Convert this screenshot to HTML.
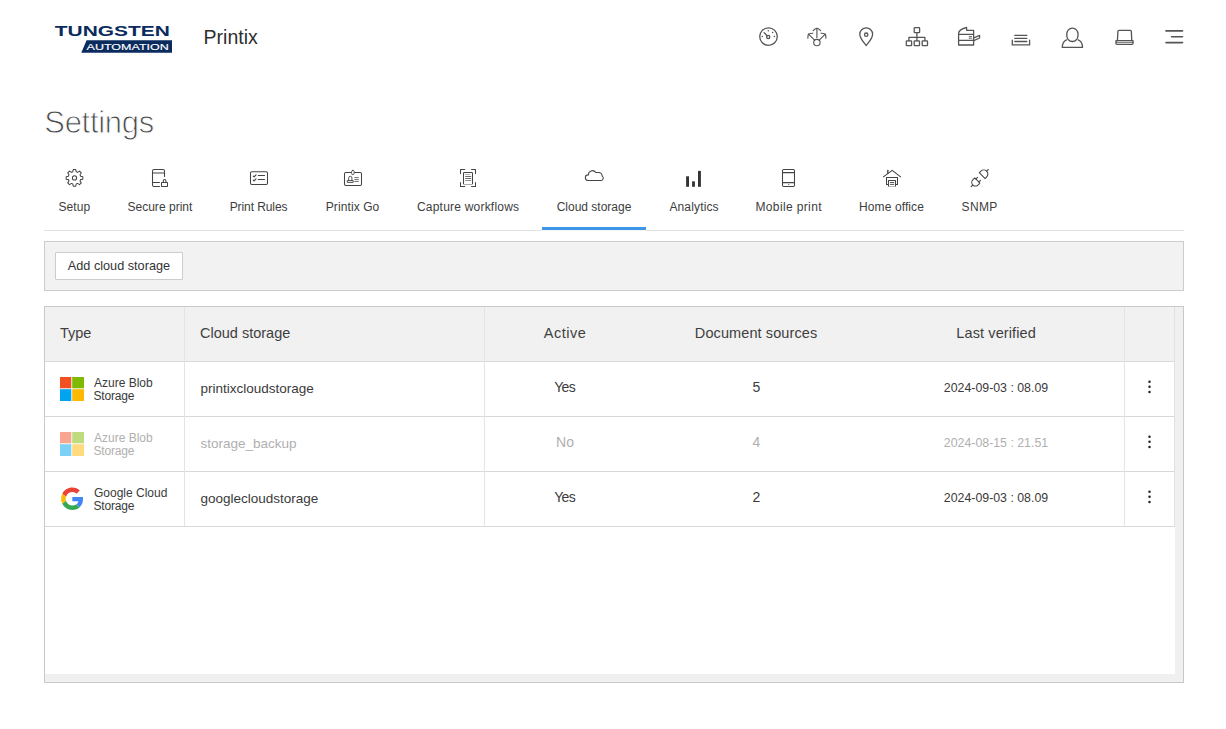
<!DOCTYPE html>
<html><head><meta charset="utf-8"><title>Settings - Cloud storage</title>
<style>
html,body{margin:0;padding:0;background:#fff;}
body{width:1226px;height:729px;position:relative;overflow:hidden;font-family:"Liberation Sans",sans-serif;}
.t{position:absolute;line-height:1;white-space:nowrap;}
.r{position:absolute;box-sizing:border-box;}
svg{position:absolute;left:0;top:0;overflow:visible;}
</style></head><body>
<div class="r" style="left:44px;top:230px;width:498px;height:1px;background:#e3e3e3;"></div>
<div class="r" style="left:646px;top:230px;width:538px;height:1px;background:#e3e3e3;"></div>
<div class="r" style="left:542px;top:230px;width:104px;height:1px;background:#f6f3ee;"></div>
<div class="r" style="left:542px;top:227px;width:104px;height:3px;background:#3c97e8;"></div>
<div class="r" style="left:44px;top:241px;width:1140px;height:50px;background:#f2f2f2;border:1px solid #cccccc;"></div>
<div class="r" style="left:55px;top:252px;width:128px;height:28px;background:#ffffff;border:1px solid #cccccc;border-radius:1px;"></div>
<div class="r" style="left:44px;top:306px;width:1140px;height:377px;background:#f0f0f0;border:1px solid #c9c9c9;"></div>
<div class="r" style="left:45px;top:307px;width:1130px;height:367px;background:#ffffff;"></div>
<div class="r" style="left:45px;top:307px;width:1130px;height:54px;background:#f1f1f1;"></div>
<div class="r" style="left:45px;top:361px;width:1130px;height:1px;background:#dadada;"></div>
<div class="r" style="left:45px;top:416px;width:1130px;height:1px;background:#d8d8d8;"></div>
<div class="r" style="left:45px;top:471px;width:1130px;height:1px;background:#d8d8d8;"></div>
<div class="r" style="left:45px;top:526px;width:1130px;height:1px;background:#d8d8d8;"></div>
<div class="r" style="left:184px;top:307px;width:1px;height:219px;background:#e4e4e4;"></div>
<div class="r" style="left:484px;top:307px;width:1px;height:219px;background:#e4e4e4;"></div>
<div class="r" style="left:1124px;top:307px;width:1px;height:219px;background:#e4e4e4;"></div>
<div class="r" style="left:1174px;top:307px;width:1px;height:220px;background:#e0e0e0;"></div>
<div class="t" style="top:28.39px;font-size:19.5px;color:#2e2e2e;left:203.60px;">Printix</div>
<div class="t" style="top:106.66px;font-size:31px;color:#4a4a4a;letter-spacing:-0.3px;left:44.30px;-webkit-text-stroke:0.9px #fff;">Settings</div>
<div class="t" style="top:201.14px;font-size:12px;color:#3d3d3d;letter-spacing:0.075px;left:-225.66px;width:600px;text-align:center;">Setup</div>
<div class="t" style="top:201.14px;font-size:12px;color:#3d3d3d;letter-spacing:0.027px;left:-140.09px;width:600px;text-align:center;">Secure print</div>
<div class="t" style="top:201.14px;font-size:12px;color:#3d3d3d;letter-spacing:-0.08px;left:-41.44px;width:600px;text-align:center;">Print Rules</div>
<div class="t" style="top:201.14px;font-size:12px;color:#3d3d3d;letter-spacing:0.1px;left:52.55px;width:600px;text-align:center;">Printix Go</div>
<div class="t" style="top:201.14px;font-size:12px;color:#3d3d3d;letter-spacing:0.213px;left:168.11px;width:600px;text-align:center;">Capture workflows</div>
<div class="t" style="top:201.14px;font-size:12px;color:#3d3d3d;left:294.00px;width:600px;text-align:center;">Cloud storage</div>
<div class="t" style="top:201.14px;font-size:12px;color:#3d3d3d;letter-spacing:0.15px;left:394.08px;width:600px;text-align:center;">Analytics</div>
<div class="t" style="top:201.14px;font-size:12px;color:#3d3d3d;letter-spacing:0.364px;left:488.68px;width:600px;text-align:center;">Mobile print</div>
<div class="t" style="top:201.14px;font-size:12px;color:#3d3d3d;letter-spacing:0.1px;left:591.55px;width:600px;text-align:center;">Home office</div>
<div class="t" style="top:201.14px;font-size:12px;color:#3d3d3d;letter-spacing:0.367px;left:679.68px;width:600px;text-align:center;">SNMP</div>
<div class="t" style="top:259.85px;font-size:12.7px;color:#333333;left:67.80px;">Add cloud storage</div>
<div class="t" style="top:325.73px;font-size:14.5px;color:#3f3f3f;left:60.00px;">Type</div>
<div class="t" style="top:325.73px;font-size:14.5px;color:#3f3f3f;left:200.00px;">Cloud storage</div>
<div class="t" style="top:325.73px;font-size:14.5px;color:#3f3f3f;letter-spacing:0.5px;left:265.00px;width:600px;text-align:center;">Active</div>
<div class="t" style="top:325.73px;font-size:14.5px;color:#3f3f3f;letter-spacing:0.1px;left:456.10px;width:600px;text-align:center;">Document sources</div>
<div class="t" style="top:325.73px;font-size:14.5px;color:#3f3f3f;letter-spacing:0.1px;left:696.10px;width:600px;text-align:center;">Last verified</div>
<div class="t" style="top:376.84px;font-size:12px;color:#3a3a3a;left:94.00px;">Azure Blob</div>
<div class="t" style="top:389.84px;font-size:12px;color:#3a3a3a;letter-spacing:-0.2px;left:93.50px;">Storage</div>
<div class="t" style="top:381.97px;font-size:13.5px;color:#3a3a3a;left:200.50px;">printixcloudstorage</div>
<div class="t" style="top:379.75px;font-size:14px;color:#3a3a3a;letter-spacing:-0.6px;left:264.70px;width:600px;text-align:center;">Yes</div>
<div class="t" style="top:379.75px;font-size:14px;color:#3a3a3a;left:456.50px;width:600px;text-align:center;">5</div>
<div class="t" style="top:381.55px;font-size:12.35px;color:#3a3a3a;left:696.00px;width:600px;text-align:center;">2024-09-03 : 08.09</div>
<div class="t" style="top:431.84px;font-size:12px;color:#afafaf;left:94.00px;">Azure Blob</div>
<div class="t" style="top:444.84px;font-size:12px;color:#afafaf;letter-spacing:-0.2px;left:93.50px;">Storage</div>
<div class="t" style="top:436.97px;font-size:13.5px;color:#afafaf;left:200.50px;">storage_backup</div>
<div class="t" style="top:434.75px;font-size:14px;color:#afafaf;left:265.00px;width:600px;text-align:center;">No</div>
<div class="t" style="top:434.75px;font-size:14px;color:#afafaf;left:456.50px;width:600px;text-align:center;">4</div>
<div class="t" style="top:436.55px;font-size:12.35px;color:#afafaf;left:696.00px;width:600px;text-align:center;">2024-08-15 : 21.51</div>
<div class="t" style="top:486.84px;font-size:12px;color:#3a3a3a;left:94.00px;">Google Cloud</div>
<div class="t" style="top:499.84px;font-size:12px;color:#3a3a3a;letter-spacing:-0.2px;left:93.50px;">Storage</div>
<div class="t" style="top:491.97px;font-size:13.5px;color:#3a3a3a;left:200.50px;">googlecloudstorage</div>
<div class="t" style="top:489.75px;font-size:14px;color:#3a3a3a;letter-spacing:-0.6px;left:264.70px;width:600px;text-align:center;">Yes</div>
<div class="t" style="top:489.75px;font-size:14px;color:#3a3a3a;left:456.50px;width:600px;text-align:center;">2</div>
<div class="t" style="top:491.55px;font-size:12.35px;color:#3a3a3a;left:696.00px;width:600px;text-align:center;">2024-09-03 : 08.09</div>
<svg width="1226" height="729" viewBox="0 0 1226 729"><circle cx="1149.5" cy="381.7" r="1.25" fill="#222"/><circle cx="1149.5" cy="386.8" r="1.25" fill="#222"/><circle cx="1149.5" cy="392" r="1.25" fill="#222"/><g><rect x="60" y="377" width="11.3" height="11.3" fill="#f25022"/><rect x="72.2" y="377" width="11.8" height="11.3" fill="#7fba00"/><rect x="60" y="389.2" width="11.3" height="11.8" fill="#00a4ef"/><rect x="72.2" y="389.2" width="11.8" height="11.8" fill="#ffb900"/></g><circle cx="1149.5" cy="436.7" r="1.25" fill="#222"/><circle cx="1149.5" cy="441.8" r="1.25" fill="#222"/><circle cx="1149.5" cy="447" r="1.25" fill="#222"/><g opacity="0.5"><rect x="60" y="432" width="11.3" height="11.3" fill="#f25022"/><rect x="72.2" y="432" width="11.8" height="11.3" fill="#7fba00"/><rect x="60" y="444.2" width="11.3" height="11.8" fill="#00a4ef"/><rect x="72.2" y="444.2" width="11.8" height="11.8" fill="#ffb900"/></g><circle cx="1149.5" cy="491.7" r="1.25" fill="#222"/><circle cx="1149.5" cy="496.8" r="1.25" fill="#222"/><circle cx="1149.5" cy="502" r="1.25" fill="#222"/><g transform="translate(61.1 487.6) scale(0.4666666666666666)"><path fill="#EA4335" d="M24 9.5c3.54 0 6.71 1.22 9.21 3.6l6.85-6.85C35.9 2.38 30.47 0 24 0 14.62 0 6.51 5.38 2.56 13.22l7.98 6.19C12.43 13.72 17.74 9.5 24 9.5z"/><path fill="#4285F4" d="M46.98 24.55c0-1.57-.15-3.090-.38-4.55H24v9.02h12.94c-.58 2.960-2.26 5.480-4.78 7.18l7.73 6c4.51-4.18 7.09-10.36 7.09-17.65z"/><path fill="#FBBC05" d="M10.53 28.59c-.48-1.45-.76-2.99-.76-4.59s.27-3.14.76-4.59l-7.98-6.19C.92 16.46 0 20.12 0 24c0 3.88.92 7.54 2.56 10.78l7.97-6.19z"/><path fill="#34A853" d="M24 48c6.48 0 11.93-2.13 15.89-5.81l-7.73-6c-2.15 1.45-4.92 2.3-8.16 2.3-6.26 0-11.57-4.22-13.47-9.91l-7.98 6.19C6.51 42.62 14.62 48 24 48z"/></g><text x="54.8" y="35.6" font-family="Liberation Sans" font-weight="bold" font-size="15" fill="#0b2b5e" textLength="115" lengthAdjust="spacingAndGlyphs">TUNGSTEN</text><polygon points="86.6,40.3 172,40.3 172,52.8 81.3,52.8" fill="#0b2b5e"/><text x="86.6" y="49.9" font-family="Liberation Sans" font-weight="normal" font-size="9.4" fill="#fff" stroke="#fff" stroke-width="0.15" textLength="82.2" lengthAdjust="spacingAndGlyphs">AUTOMATION</text><g fill="none" stroke="#555" stroke-width="1.3" stroke-linecap="round" stroke-linejoin="round"><circle cx="768.5" cy="36.6" r="8.8"/><circle cx="768.2" cy="36.9" r="1.6"/><line x1="767.1" y1="35.7" x2="764.1" y2="32.6"/></g><g fill="#555"><circle cx="768.3" cy="30.8" r="0.75"/><circle cx="772.6" cy="32.5" r="0.75"/><circle cx="762.2" cy="36.6" r="0.75"/><circle cx="774.4" cy="36.6" r="0.75"/></g><g fill="none" stroke="#555" stroke-width="1.15" stroke-linecap="round" stroke-linejoin="round"><circle cx="816.9" cy="42.5" r="3.2"/><line x1="816.9" y1="37.6" x2="816.9" y2="28.4"/><path d="M813.2,30.6 Q815,28.6 816.9,28.2 Q818.8,28.6 820.6,30.6"/><line x1="814.6" y1="40.1" x2="808.5" y2="34.2"/><path d="M812.7,33.2 Q810,33.4 808.4,34.2 Q807.8,36 807.9,38.2"/><line x1="819.2" y1="40.1" x2="825.3" y2="34.2"/><path d="M821.1,33.2 Q823.8,33.4 825.4,34.2 Q826,36 825.9,38.2"/></g><g fill="none" stroke="#555" stroke-width="1.3" stroke-linecap="round" stroke-linejoin="round"><path d="M866.2,45.6 C863,41.5 859.8,38.3 859.8,34.3 A6.4,6.4 0 0 1 872.6,34.3 C872.6,38.3 869.4,41.5 866.2,45.6 Z"/><circle cx="866.2" cy="34.7" r="1.7"/></g><g fill="none" stroke="#555" stroke-width="1.3" stroke-linecap="round" stroke-linejoin="round"><rect x="914.2" y="27.6" width="5.4" height="5" rx="0.6"/><line x1="916.9" y1="32.6" x2="916.9" y2="40.8"/><polyline points="908.9,40.8 908.9,37.4 924.9,37.4 924.9,40.8"/><rect x="906.3" y="40.8" width="5.3" height="4.9" rx="0.6"/><rect x="914.2" y="40.8" width="5.3" height="4.9" rx="0.6"/><rect x="922.2" y="40.8" width="5.3" height="4.9" rx="0.6"/></g><g fill="none" stroke="#555" stroke-width="1.3" stroke-linecap="round" stroke-linejoin="round"><path d="M958.6,45 V33.5 C958.6,30.5 962.5,28.5 966.6,27.5 V30.3 H973.6 V45 Z"/><line x1="958.6" y1="34.3" x2="973.6" y2="34.3"/><line x1="958.6" y1="40.3" x2="973.6" y2="40.3"/><polyline points="973.8,37.8 979.6,35.4 979.6,38 973.8,40.6"/><line x1="969.2" y1="36.6" x2="971.6" y2="36.6" stroke-width="0.9"/><line x1="969.2" y1="38.2" x2="971.6" y2="38.2" stroke-width="0.9"/></g><g fill="none" stroke="#555" stroke-width="1.3" stroke-linecap="round" stroke-linejoin="round"><polyline points="1012.3,40.2 1012.3,44.9 1029.6,44.9 1029.6,40.2"/><line x1="1014.8" y1="35.4" x2="1026.8" y2="35.4"/><line x1="1014.8" y1="38.4" x2="1026.8" y2="38.4"/><line x1="1014.8" y1="41.5" x2="1026.8" y2="41.5"/></g><g fill="none" stroke="#555" stroke-width="1.3" stroke-linecap="round" stroke-linejoin="round"><rect x="1066.8" y="28.2" width="11.2" height="13.3" rx="5.4" ry="5.9"/><path d="M1066.6,39.8 C1063.5,41 1062.3,44 1062.3,47.4 H1082.5 C1082.5,44 1081.3,41 1078.2,39.8"/></g><g fill="none" stroke="#555" stroke-width="1.3" stroke-linecap="round" stroke-linejoin="round"><path d="M1117.4,40.6 L1117.9,31.4 Q1118,30.4 1119,30.4 H1130.2 Q1131.2,30.4 1131.3,31.4 L1131.8,40.6"/><path d="M1116,40.6 H1133 V43.6 Q1133,44.4 1132.2,44.4 H1116.8 Q1116,44.4 1116,43.6 Z"/><line x1="1116" y1="42.4" x2="1133" y2="42.4" stroke-width="0.8"/></g><g stroke="#555" stroke-width="1.6" stroke-linecap="round"><line x1="1166" y1="30.9" x2="1182.5" y2="30.9"/><line x1="1171.6" y1="36.8" x2="1182.5" y2="36.8"/><line x1="1166" y1="42.6" x2="1182.5" y2="42.6"/></g><g fill="none" stroke="#444" stroke-width="1.05" stroke-linecap="round" stroke-linejoin="round"><path d="M72.77,171.84 L73.25,169.59 L75.75,169.59 L76.23,171.84 A6.3,6.3 0 0 1 77.56,172.39 L79.49,171.15 L81.25,172.91 L80.01,174.84 A6.3,6.3 0 0 1 80.56,176.17 L82.81,176.65 L82.81,179.15 L80.56,179.63 A6.3,6.3 0 0 1 80.01,180.96 L81.25,182.89 L79.49,184.65 L77.56,183.41 A6.3,6.3 0 0 1 76.23,183.96 L75.75,186.21 L73.25,186.21 L72.77,183.96 A6.3,6.3 0 0 1 71.44,183.41 L69.51,184.65 L67.75,182.89 L68.99,180.96 A6.3,6.3 0 0 1 68.44,179.63 L66.19,179.15 L66.19,176.65 L68.44,176.17 A6.3,6.3 0 0 1 68.99,174.84 L67.75,172.91 L69.51,171.15 L71.44,172.39 A6.3,6.3 0 0 1 72.77,171.84 Z"/><circle cx="74.5" cy="177.9" r="2.1"/></g><g fill="none" stroke="#444" stroke-width="1.05" stroke-linecap="round" stroke-linejoin="round"><path d="M159.5,186.5 H154 Q152.5,186.5 152.5,185 V171 Q152.5,169.5 154,169.5 H163 Q164.5,169.5 164.5,171 V176.5"/><line x1="152.5" y1="172.9" x2="164.5" y2="172.9"/><line x1="152.5" y1="182.5" x2="159.5" y2="182.5"/><rect x="161.5" y="182.5" width="6" height="4" rx="0.3"/><path d="M163.3,182.5 V180.8 A1.3,1.3 0 0 1 165.9,180.8 V182.5"/></g><g fill="none" stroke="#444" stroke-width="1.05" stroke-linecap="round" stroke-linejoin="round"><rect x="250.5" y="171.8" width="17" height="12.7" rx="1.3"/><polyline points="253.3,176.1 254.1,176.9 256,174.9" stroke-width="1.2"/><polyline points="253.3,180.1 254.1,180.9 256,178.9" stroke-width="1.2"/><line x1="258.3" y1="175.5" x2="264.6" y2="175.5"/><line x1="258.3" y1="179.5" x2="264.6" y2="179.5"/></g><g fill="none" stroke="#444" stroke-width="1.05" stroke-linecap="round" stroke-linejoin="round"><path d="M350.8,172.5 H345.8 Q344.5,172.5 344.5,173.8 V184.2 Q344.5,185.5 345.8,185.5 H360.2 Q361.5,185.5 361.5,184.2 V173.8 Q361.5,172.5 360.2,172.5 H354.6"/><rect x="351.6" y="170.4" width="2.5" height="4.2" rx="1.1" stroke-width="0.9"/><rect x="347.6" y="180.6" width="5.6" height="1.8" stroke-width="0.9"/><path d="M348.7,180.6 V177.9 A1.6,1.6 0 0 1 351.9,177.9 V180.6" stroke-width="0.9"/><line x1="354.8" y1="177.5" x2="358.4" y2="177.5" stroke-width="0.7"/><line x1="354.8" y1="179.4" x2="358.4" y2="179.4" stroke-width="0.8"/><line x1="354.8" y1="181.4" x2="358.4" y2="181.4" stroke-width="0.8"/></g><g fill="none" stroke="#444" stroke-width="1.05" stroke-linecap="round" stroke-linejoin="round"><polyline points="460.5,173.6 460.5,169.5 464.8,169.5"/><polyline points="471.5,169.5 475.5,169.5 475.5,173.6"/><polyline points="460.5,182.4 460.5,186.5 464.8,186.5"/><polyline points="471.5,186.5 475.5,186.5 475.5,182.4"/><path d="M463.5,183.8 V173.3 Q463.5,172.5 464.3,172.5 H471.7 Q472.5,172.5 472.5,173.3 V183.8" /><line x1="464" y1="184.4" x2="472" y2="184.4" stroke="#aaa"/><line x1="465.6" y1="174.5" x2="469.8" y2="174.5" stroke-width="0.8" stroke="#999"/><line x1="465.6" y1="176.5" x2="470.8" y2="176.5" stroke-width="0.8"/><line x1="465.6" y1="178.5" x2="470.8" y2="178.5" stroke-width="0.8"/><line x1="465.6" y1="180.5" x2="470.8" y2="180.5" stroke-width="0.8" stroke="#777"/></g><g fill="none" stroke="#444" stroke-width="1.05" stroke-linecap="round" stroke-linejoin="round"><path d="M588,180.5 H600.8 A2.4,2.4 0 0 0 602.2,176.1 A3.8,3.8 0 0 0 598.6,172.5 H595.8 A4.1,4.1 0 0 0 588.3,174.9 A2.8,2.8 0 0 0 588,180.5 Z"/></g><g fill="#333"><rect x="686.1" y="176.3" width="2.9" height="10.5"/><rect x="692.1" y="181.3" width="2.8" height="5.5"/><rect x="698" y="170.9" width="2.9" height="15.9"/></g><g fill="none" stroke="#444" stroke-width="1.05" stroke-linecap="round" stroke-linejoin="round"><rect x="782.5" y="169.5" width="12" height="17" rx="1.3"/><line x1="782.5" y1="172.6" x2="794.5" y2="172.6"/><line x1="782.5" y1="182.6" x2="794.5" y2="182.6"/></g><circle cx="788.8" cy="184.5" r="0.6" fill="#444"/><g fill="none" stroke="#444" stroke-width="1.05" stroke-linecap="round" stroke-linejoin="round"><polyline points="883.4,176.9 892.2,170.3 900.6,176.9"/><line x1="887.8" y1="173.4" x2="887.8" y2="170.3" stroke-width="1.3"/><polyline points="888.5,184.5 886.5,184.5 886.5,177.5 897.5,177.5 897.5,184.5 895.5,184.5"/><path d="M888.5,186.3 V180.5 H895.5 V186.3"/><line x1="889" y1="186.5" x2="895" y2="186.5" stroke="#bbb"/><line x1="890.4" y1="182.5" x2="893.8" y2="182.5" stroke-width="0.9"/><line x1="890.4" y1="184.4" x2="893.8" y2="184.4" stroke-width="0.9"/></g><g fill="none" stroke="#444" stroke-width="1.05" stroke-linecap="round" stroke-linejoin="round" transform="translate(979.75 178.1) rotate(-45)"><path d="M3.5,-4.1 H5.7 A4.1,4.1 0 0 1 5.7,4.1 H3.5 Z"/><line x1="9.8" y1="0" x2="12.2" y2="0"/><path d="M-3.4,-3.6 H-6.2 A3.6,3.6 0 0 0 -6.2,3.6 H-3.4 Z"/><line x1="-9.8" y1="0" x2="-12.2" y2="0"/><line x1="-3.4" y1="-2.1" x2="-1" y2="-2.1"/><line x1="-3.4" y1="2.1" x2="-1" y2="2.1"/></g></svg>
</body></html>
